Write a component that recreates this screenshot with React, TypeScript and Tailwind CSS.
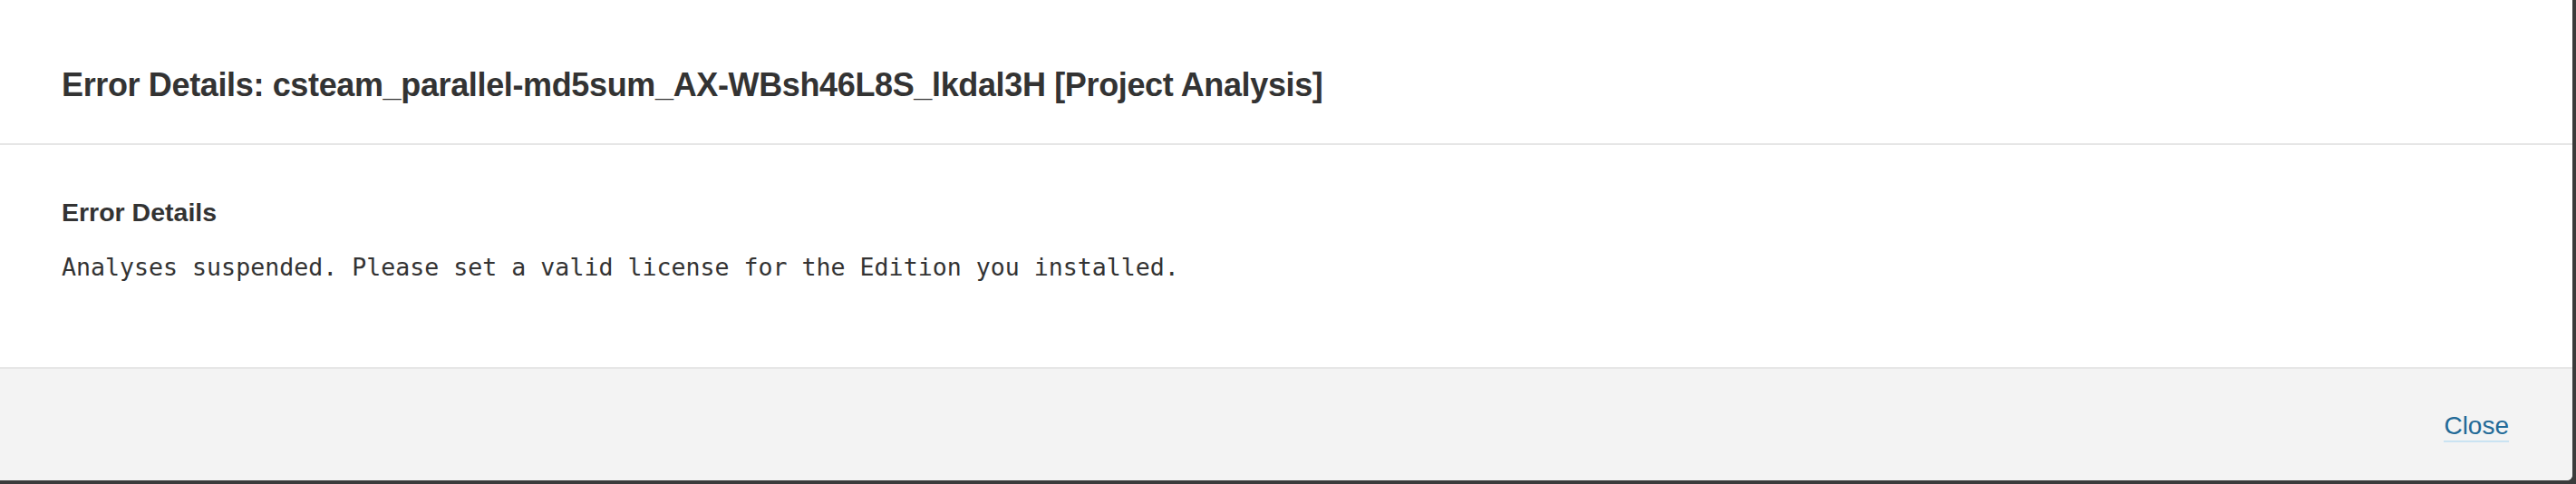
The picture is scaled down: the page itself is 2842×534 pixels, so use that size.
export default function App() {
  return (
    <div className="h-[534px] w-[2842px] overflow-hidden bg-[#3b3b3b]">
      <div className="flex h-[530px] w-[2838px] flex-col overflow-hidden rounded-br-md bg-white font-['Liberation_Sans',Arial,sans-serif] text-[#333]">
        {/* header */}
        <div className="h-[160px] shrink-0 border-b-2 border-[#e6e6e6] pl-[68px] pt-[74px]">
          <h2 className="text-[36px] font-bold leading-[40px] tracking-[-0.36px]">
            Error Details: csteam_parallel-md5sum_AX-WBsh46L8S_lkdal3H [Project Analysis]
          </h2>
        </div>

        {/* body */}
        <div className="h-[245px] shrink-0 pl-[68px] pt-[59px]">
          <h3 className="text-[28.5px] font-bold leading-[30px]">Error Details</h3>
          <pre className="mt-[30px] font-['DejaVu_Sans_Mono',monospace] text-[26.6px] leading-[32px] text-[#333]">
            Analyses suspended. Please set a valid license for the Edition you installed.
          </pre>
        </div>

        {/* footer */}
        <div className="flex flex-1 items-start justify-end border-t-2 border-[#e6e6e6] bg-[#f3f3f3] pr-[70px] pt-[47px]">
          <button className="inline-block border-b-2 border-[#cae3f2] text-[28px] leading-[32px] text-[#236a97]">
            Close
          </button>
        </div>
      </div>
    </div>
  );
}
